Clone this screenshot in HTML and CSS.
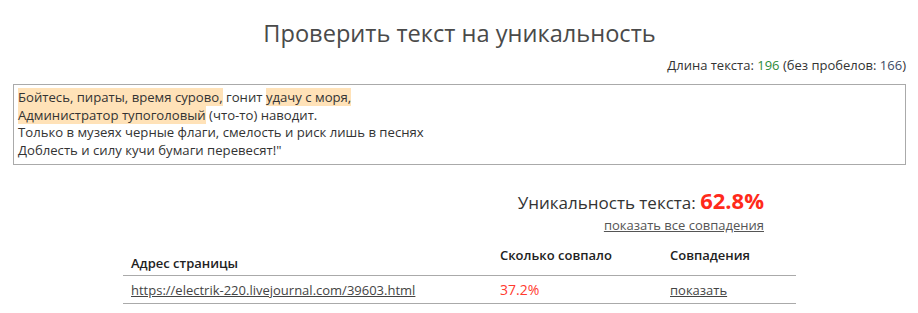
FILE: index.html
```html
<!DOCTYPE html>
<html lang="ru">
<head>
<meta charset="utf-8">
<title>Проверить текст на уникальность</title>
<link rel="stylesheet" href="styles.css">
</head>
<body>
<div class="page">
  <h1 class="title">Проверить текст на уникальность</h1>
  <div class="length">Длина текста: <span class="num-green">196</span> (без пробелов: <span class="num-blue">166</span>)</div>
  <div class="textbox">
    <div class="line"><span class="hl">Бойтесь, пираты, время сурово,</span> гонит <span class="hl">удачу с моря,</span></div>
    <div class="line"><span class="hl">Администратор тупоголовый</span> (что-то) наводит.</div>
    <div class="line">Только в музеях черные флаги, смелость и риск лишь в песнях</div>
    <div class="line">Доблесть и силу кучи бумаги перевесят!"</div>
  </div>
  <div class="results">
    <div class="unique">Уникальность текста: <span class="percent">62.8%</span></div>
    <div class="all-link"><a href="#">показать все совпадения</a></div>
    <table class="matches">
      <thead>
        <tr>
          <th class="col-url">Адрес страницы</th>
          <th class="col-pct">Сколько совпало</th>
          <th class="col-show">Совпадения</th>
        </tr>
      </thead>
      <tbody>
        <tr>
          <td class="col-url"><a href="#">https://electrik-220.livejournal.com/39603.html</a></td>
          <td class="col-pct red">37.2%</td>
          <td class="col-show"><a href="#">показать</a></td>
        </tr>
      </tbody>
    </table>
  </div>
</div>
</body>
</html>
```

FILE: styles.css
```css
html, body {
  margin: 0;
  padding: 0;
  background: #fff;
}

body {
  font-family: "Open Sans", "Noto Sans", sans-serif;
  color: #333;
  font-size: 13px;
}

.page {
  padding: 17px 12px 0 13px;
}

.title {
  margin: 0;
  font-size: 23.6px;
  font-weight: 400;
  line-height: 32px;
  color: #4a4a4a;
  text-align: center;
}

.length {
  margin-top: 7px;
  text-align: right;
  line-height: 18px;
  color: #333;
}

.num-green {
  color: #2e8b3a;
}

.num-blue {
  color: #3d4b66;
}

.textbox {
  margin-top: 10px;
  border: 1px solid #aaa;
  padding: 4px 4px 5px;
  font-size: 13.15px;
  line-height: 17.5px;
  color: #333;
}

.hl {
  background: #ffe2b8;
}

.results {
  width: 673px;
  margin: 0 auto;
}

.unique {
  margin-top: 22px;
  text-align: right;
  padding-right: 32px;
  font-size: 17px;
  line-height: 27px;
  color: #333;
}

.percent {
  font-size: 22px;
  font-weight: 700;
  color: #ff2a1a;
}

.all-link {
  text-align: right;
  padding-right: 32px;
  line-height: 18px;
}

.all-link a {
  color: #555;
  text-decoration: underline;
}

.matches {
  margin-top: 4px;
  width: 100%;
  border-collapse: collapse;
}

.matches th {
  text-align: left;
  font-weight: 600;
  color: #222;
  line-height: 18px;
  padding: 8px 8px 11px;
  vertical-align: bottom;
  border-bottom: 1px solid #aaa;
}

.matches th.col-url {
  padding-bottom: 3px;
}

.matches td {
  line-height: 18px;
  padding: 5px 8px 4px;
  border-bottom: 1px solid #aaa;
}

.col-url {
  width: 353px;
}

.col-pct {
  width: 154px;
}

.matches td a {
  color: #444;
  text-decoration: underline;
}

.red {
  color: #ff3b30;
  font-size: 14px;
}
```
